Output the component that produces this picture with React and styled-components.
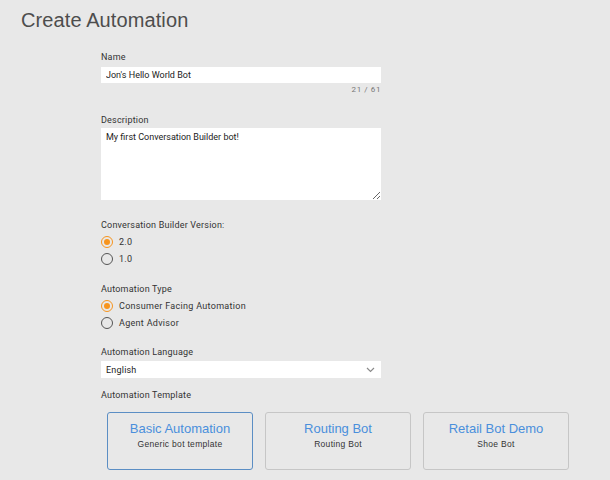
import React from "react";
import styled, { createGlobalStyle } from "styled-components";

const GlobalStyle = createGlobalStyle`
  html, body {
    margin: 0;
    padding: 0;
    background: #e8e8e8;
  }
  body {
    font-family: Roboto, "Liberation Sans", sans-serif;
    color: #333;
  }
`;

const templates = [
  { title: "Basic Automation", subtitle: "Generic bot template", selected: true },
  { title: "Routing Bot", subtitle: "Routing Bot" },
  { title: "Retail Bot Demo", subtitle: "Shoe Bot" },
];

const App = () => {
  return (
    <>
      <GlobalStyle />
      <Page>
        <Title>Create Automation</Title>
        <Form>
          <Label $mt={21} $mb={4}>Name</Label>
          <TextInput defaultValue="Jon's Hello World Bot" />
          <Counter>21 / 61</Counter>

          <Label $mt={18} $mb={2}>Description</Label>
          <TextArea defaultValue="My first Conversation Builder bot!" />

          <Label $mt={19} $mb={2}>Conversation Builder Version:</Label>
          <Radio checked label="2.0" />
          <Radio label="1.0" />

          <Label $mt={16} $mb={2}>Automation Type</Label>
          <Radio checked label="Consumer Facing Automation" />
          <Radio label="Agent Advisor" />

          <Label $mt={15} $mb={3}>Automation Language</Label>
          <Select>
            <span>English</span>
            <svg width="9" height="6" viewBox="0 0 9 6">
              <path d="M1 1 L4.5 4.5 L8 1" fill="none" stroke="#8a8a8a" strokeWidth="1.2" />
            </svg>
          </Select>

          <Label $mt={11} $mb={11}>Automation Template</Label>
          <Cards>
            {templates.map((t) => (
              <Card key={t.title} $selected={t.selected}>
                <CardTitle>{t.title}</CardTitle>
                <CardSub>{t.subtitle}</CardSub>
              </Card>
            ))}
          </Cards>
        </Form>
      </Page>
    </>
  );
};

const Radio = ({ checked, label }) => (
  <RadioRow>
    <Circle $checked={checked} />
    <span>{label}</span>
  </RadioRow>
);

const Page = styled.div`
  padding: 10px 21px 0;
`;

const Title = styled.h1`
  margin: 0;
  font-family: "Liberation Sans", Arial, sans-serif;
  font-weight: 400;
  font-size: 20px;
  line-height: 20px;
  color: #4d4d4d;
  letter-spacing: 0.1px;
`;

const Form = styled.div`
  margin-left: 80px;
  width: 280px;
  display: flex;
  flex-direction: column;
`;

const Label = styled.div`
  font-size: 9px;
  line-height: 12px;
  height: 12px;
  color: #333;
  letter-spacing: 0.2px;
  margin-top: ${(p) => p.$mt}px;
  margin-bottom: ${(p) => p.$mb}px;
`;

const TextInput = styled.input`
  box-sizing: border-box;
  height: 16px;
  width: 100%;
  border: none;
  outline: none;
  background: #fff;
  padding: 0 5px;
  font-family: Roboto, sans-serif;
  font-size: 9px;
  color: #222;
`;

const Counter = styled.div`
  margin-top: 1px;
  height: 12px;
  line-height: 12px;
  text-align: right;
  font-size: 8px;
  color: #777;
  letter-spacing: 0.6px;
`;

const TextArea = styled.textarea`
  box-sizing: border-box;
  width: 100%;
  height: 72px;
  border: none;
  outline: none;
  background: #fff;
  padding: 4px 5px;
  font-family: Roboto, sans-serif;
  font-size: 9px;
  color: #222;
  resize: vertical;
`;

const RadioRow = styled.div`
  display: flex;
  align-items: center;
  gap: 6px;
  height: 17px;
  font-size: 9px;
  letter-spacing: 0.3px;
  color: #333;
`;

const Circle = styled.span`
  box-sizing: border-box;
  width: 12px;
  height: 12px;
  border-radius: 50%;
  border: 1.5px solid ${(p) => (p.$checked ? "#f7941d" : "#555")};
  display: flex;
  align-items: center;
  justify-content: center;
  &::after {
    content: "";
    width: 6px;
    height: 6px;
    border-radius: 50%;
    background: #f7941d;
    display: ${(p) => (p.$checked ? "block" : "none")};
  }
`;

const Select = styled.div`
  box-sizing: border-box;
  height: 17px;
  background: #fff;
  padding: 0 6px 0 5px;
  display: flex;
  align-items: center;
  justify-content: space-between;
  font-size: 9px;
  color: #222;
  letter-spacing: 0.2px;
`;

const Cards = styled.div`
  display: flex;
  gap: 12px;
  margin-left: 6px;
  width: 462px;
`;

const Card = styled.div`
  box-sizing: border-box;
  width: 146px;
  height: 58px;
  border-radius: 3px;
  border: 1px solid ${(p) => (p.$selected ? "#5b8ec4" : "#c6c6c6")};
  display: flex;
  flex-direction: column;
  align-items: center;
  padding-top: 8px;
  font-family: "Liberation Sans", Arial, sans-serif;
`;

const CardTitle = styled.div`
  font-size: 13px;
  line-height: 16px;
  color: #4a8fdc;
`;

const CardSub = styled.div`
  font-size: 8.5px;
  line-height: 14px;
  color: #333;
  letter-spacing: 0.3px;
`;

export default App;
